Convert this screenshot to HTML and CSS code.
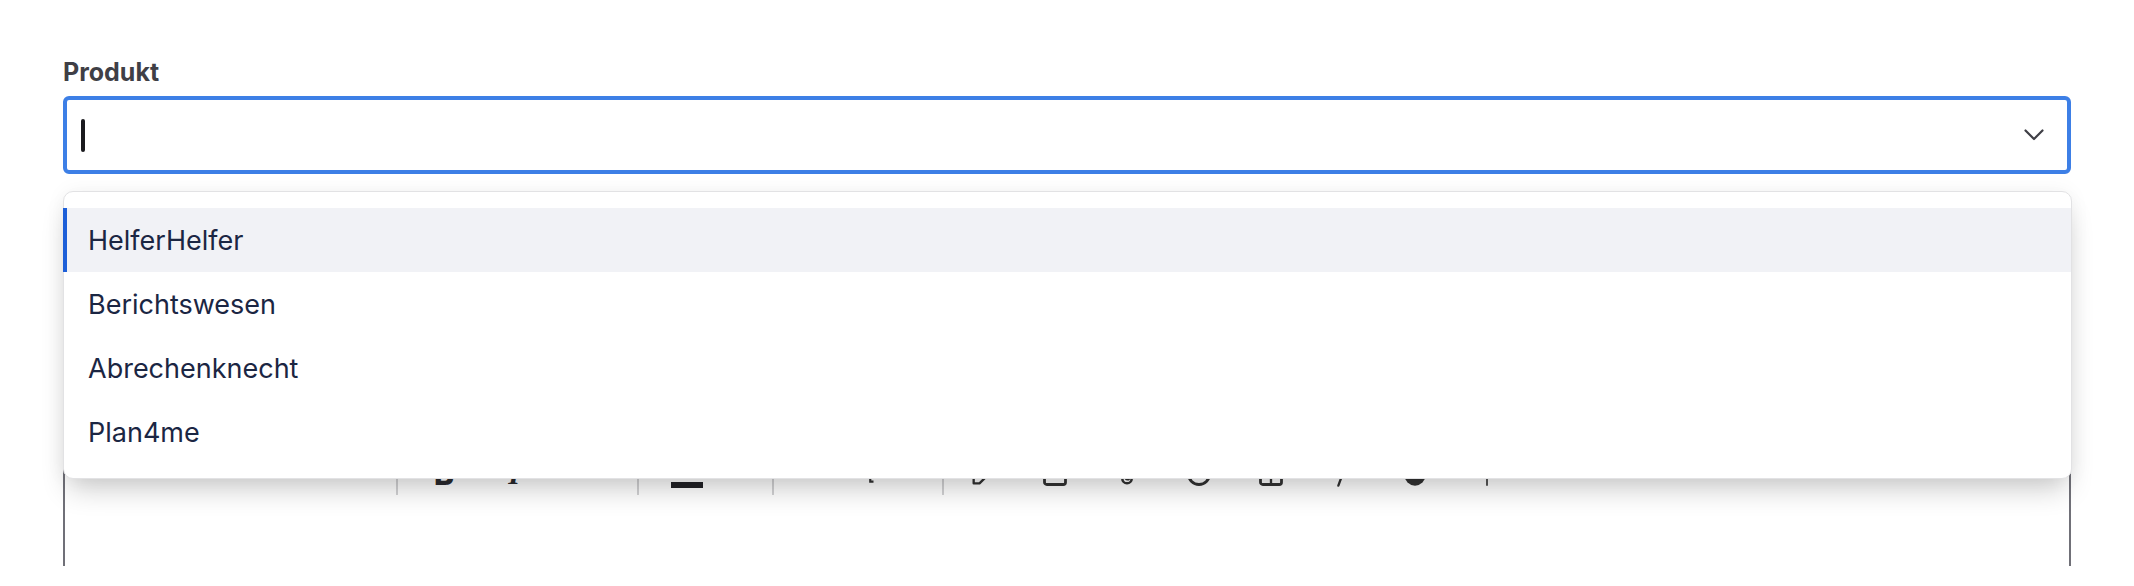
FILE: index.html
```html
<!DOCTYPE html>
<html lang="de">
<head>
<meta charset="utf-8">
<title>Produkt</title>
<link rel="stylesheet" href="styles.css">
</head>
<body>
<div class="page">
  <div class="label">Produkt</div>
  <div class="field">
    <div class="combo">
      <span class="caret"></span>
      <svg class="chevron" width="20" height="12" viewBox="0 0 20 12"><path d="M1.5 1.5 L10 10 L18.5 1.5" fill="none" stroke="#3f3f46" stroke-width="2.2" stroke-linecap="round" stroke-linejoin="round"/></svg>
    </div>
    <div class="menu">
      <div class="option active">HelferHelfer</div>
      <div class="option">Berichtswesen</div>
      <div class="option">Abrechenknecht</div>
      <div class="option">Plan4me</div>
    </div>
    <div class="editor">
      <div class="toolbar">
        <div class="group g1"><span class="select-text">Absatz</span><span class="select-text">Normal</span></div>
        <div class="sep"></div>
        <div class="group g2">
          <span class="tool txt bold">B</span>
          <span class="tool txt italic">I</span>
        </div>
        <div class="sep"></div>
        <div class="group g3">
          <span class="tool color"><span class="color-a">A</span><span class="color-bar"></span></span>
        </div>
        <div class="sep"></div>
        <div class="group g4">
          <span class="tool"><svg width="28" height="28" viewBox="0 0 24 24"><path d="M9 4h12M9 9h12M9 14h12" stroke="#bbb" stroke-width="2"/><circle cx="4" cy="4" r="1.5" fill="#bbb"/><circle cx="4" cy="9" r="1.5" fill="#bbb"/><circle cx="4" cy="14" r="1.5" fill="#bbb"/></svg></span>
          <span class="tool"><svg width="28" height="28" viewBox="0 0 24 24"><path d="M10 4h11M10 9h11M10 14h11" stroke="#333" stroke-width="2"/><path d="M3 12v7h3" fill="none" stroke="#333" stroke-width="2"/></svg></span>
        </div>
        <div class="sep"></div>
        <div class="group g5">
          <span class="tool"><svg width="28" height="28" viewBox="0 0 24 24"><path d="M16 3l5 5L9 20H4v-5z" fill="none" stroke="#333" stroke-width="2" stroke-linejoin="round"/></svg></span>
          <span class="tool"><svg width="28" height="28" viewBox="0 0 24 24"><rect x="3" y="4" width="18" height="17" rx="2" fill="none" stroke="#333" stroke-width="2.4"/><circle cx="9" cy="10" r="2" fill="#333"/></svg></span>
          <span class="tool"><svg width="28" height="28" viewBox="0 0 24 24"><path d="M16 7v9a4 4 0 0 1-8 0V6a3 3 0 0 1 6 0v9a1.5 1.5 0 0 1-3 0V8" fill="none" stroke="#333" stroke-width="2.2" stroke-linecap="round"/></svg></span>
          <span class="tool"><svg width="28" height="28" viewBox="0 0 24 24"><circle cx="12" cy="12" r="9" fill="none" stroke="#333" stroke-width="2.4"/><circle cx="9" cy="10" r="1.2" fill="#333"/><circle cx="15" cy="10" r="1.2" fill="#333"/></svg></span>
          <span class="tool"><svg width="28" height="28" viewBox="0 0 24 24"><rect x="3" y="4" width="18" height="17" rx="2" fill="none" stroke="#333" stroke-width="2.4"/><path d="M3 10h18M12 10v11" stroke="#333" stroke-width="2"/></svg></span>
          <span class="tool"><svg width="28" height="28" viewBox="0 0 24 24"><path d="M15 3L8 22" stroke="#333" stroke-width="2" stroke-linecap="round"/></svg></span>
          <span class="tool"><svg width="28" height="28" viewBox="0 0 24 24"><circle cx="12" cy="13" r="9" fill="#333"/><path d="M12 8v6" stroke="#fff" stroke-width="2"/></svg></span>
          <span class="tool"><svg width="28" height="28" viewBox="0 0 24 24"><path d="M12 3v19" stroke="#333" stroke-width="1.4"/></svg></span>
        </div>
      </div>
      <div class="content"></div>
    </div>
  </div>
</div>
</body>
</html>
```
FILE: styles.css
```css
* { box-sizing: border-box; }
html, body { margin: 0; background: #fff; }
body { font-family: Inter, "Noto Sans", sans-serif; }

.page { padding: 56px 63px 0 63px; }

.label {
  font-size: 25px;
  line-height: 32px;
  font-weight: 700;
  color: #3f3f46;
  margin-bottom: 8px;
}

.field { position: relative; }

.combo {
  height: 78px;
  border: 4px solid #3d7fe6;
  border-radius: 6px;
  display: flex;
  align-items: center;
  justify-content: space-between;
  padding: 0 23px 0 14px;
  background: #fff;
}
.caret {
  width: 4px;
  height: 33px;
  background: #1a1a1e;
  border-radius: 2px;
}
.chevron { display: block; }

.menu {
  position: absolute;
  top: 95px;
  left: 0;
  right: -1px;
  z-index: 5;
  background: #fff;
  border: 1px solid #e2e2e4;
  border-radius: 10px;
  padding: 16px 0 14px;
  box-shadow: 0 16px 28px -6px rgba(0,0,0,0.2), 0 0 20px rgba(0,0,0,0.05);
}
.option {
  height: 64px;
  display: flex;
  align-items: center;
  padding-left: 24px;
  font-size: 27px;
  color: #1b2643;
}
.option.active {
  background: #f1f2f6;
  margin-left: -1px;
  border-left: 4px solid #1d5fd8;
  padding-left: 21px;
}

.editor {
  margin-top: 266px;
  border: 2px solid #707078;
  border-top: none;
  border-bottom: none;
  height: 126px;
}
.toolbar {
  height: 68px;
  display: flex;
  align-items: center;
}
.sep {
  width: 2px;
  height: 38px;
  background: #d2d2d4;
  margin-top: 4px;
}
.group { display: flex; align-items: center; height: 100%; }
.g1 { width: 331px; padding-left: 80px; gap: 30px; }
.g2 { width: 239px; padding-left: 26px; gap: 30px; }
.g3 { width: 133px; padding-left: 32px; }
.g4 { width: 168px; padding-left: 20px; gap: 47px; }
.g5 { padding-left: 19px; gap: 32px; }

.select-text { font-size: 22px; color: #d8d8da; line-height: 1; margin-bottom: 14px; }
.tool {
  width: 40px;
  height: 40px;
  display: flex;
  align-items: center;
  justify-content: center;
}
.g4 .tool { width: 26px; }
.txt { font-size: 30px; color: #2a2a2e; line-height: 1; }
.bold { font-weight: 800; }
.italic { font-family: "Liberation Serif", serif; font-style: italic; font-weight: 700; }
.color { flex-direction: column; width: 32px; gap: 2px; padding-top: 0; justify-content: flex-start; }
.color-a { font-size: 24px; font-weight: 700; color: #2a2a2e; line-height: 1; margin-top: 0; }
.color-bar { width: 32px; height: 6px; background: #222226; margin-top: 2px; }
```
